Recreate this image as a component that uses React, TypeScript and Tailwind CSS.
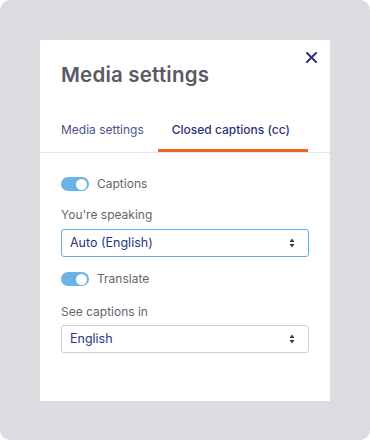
import React from "react";

function Toggle() {
  return (
    <div className="w-[28px] h-[14px] rounded-full bg-[#6cb2e6] flex items-center justify-end pr-[2px]">
      <div className="w-[11px] h-[11px] rounded-full bg-white" />
    </div>
  );
}

function Arrows() {
  return (
    <svg width="6" height="10" viewBox="0 0 6 10">
      <path d="M3 0.5 L5.5 4 L0.5 4 Z" fill="#3a3a44" />
      <path d="M3 9.5 L5.5 6 L0.5 6 Z" fill="#3a3a44" />
    </svg>
  );
}

function Select({ value, focused }: { value: string; focused?: boolean }) {
  return (
    <div
      className={
        "h-[28px] rounded-[3px] border flex items-center justify-between pl-[8px] pr-[13px] bg-white " +
        (focused ? "border-[#63aee6]" : "border-[#cfcfd4]")
      }
    >
      <span className="text-[12.5px] text-[#2c3480]">{value}</span>
      <Arrows />
    </div>
  );
}

export default function App() {
  return (
    <div className="w-[370px] h-[440px] bg-white" style={{ fontFamily: "Inter, 'Liberation Sans', sans-serif" }}>
      <div className="w-[370px] h-[440px] bg-[#dcdbe0] rounded-[10px] pt-[40px] px-[40px]">
        <div className="w-[290px] h-[361px] bg-white flex flex-col">
          <div className="relative px-[21px] pt-[21px]">
            <h1 className="text-[20.5px] font-semibold text-[#5a5a66] leading-[28px] tracking-[0.2px]">Media settings</h1>
            <button className="absolute right-[13px] top-[12px] text-[#2c3480]">
              <svg width="11" height="11" viewBox="0 0 11 11">
                <path d="M1 1 L10 10 M10 1 L1 10" stroke="#2c3480" strokeWidth="2" strokeLinecap="round" />
              </svg>
            </button>
          </div>
          <div className="mt-[33px] flex border-b border-[#e6e6ea] pl-[21px] pr-[22px] whitespace-nowrap">
            <div className="pb-[14px] text-[12px] leading-[16px] text-[#4a5290] mr-[14px]">Media settings</div>
            <div className="pb-[11px] px-[14px] text-[12px] leading-[16px] font-medium text-[#2c3478] border-b-[3px] border-[#f26322] flex-1">
              Closed captions (cc)
            </div>
          </div>
          <div className="px-[21px] pt-[23px] flex flex-col">
            <div className="flex items-center gap-[8px] h-[16px]">
              <Toggle />
              <span className="text-[12px] leading-[16px] text-[#66666e]">Captions</span>
            </div>
            <div className="mt-[15px] text-[12px] text-[#66666e] leading-[16px]">You're speaking</div>
            <div className="mt-[6px]">
              <Select value="Auto (English)" focused />
            </div>
            <div className="mt-[14px] flex items-center gap-[8px] h-[16px]">
              <Toggle />
              <span className="text-[12px] leading-[16px] text-[#66666e]">Translate</span>
            </div>
            <div className="mt-[17px] text-[12px] text-[#66666e] leading-[16px]">See captions in</div>
            <div className="mt-[5px]">
              <Select value="English" />
            </div>
          </div>
        </div>
      </div>
    </div>
  );
}
